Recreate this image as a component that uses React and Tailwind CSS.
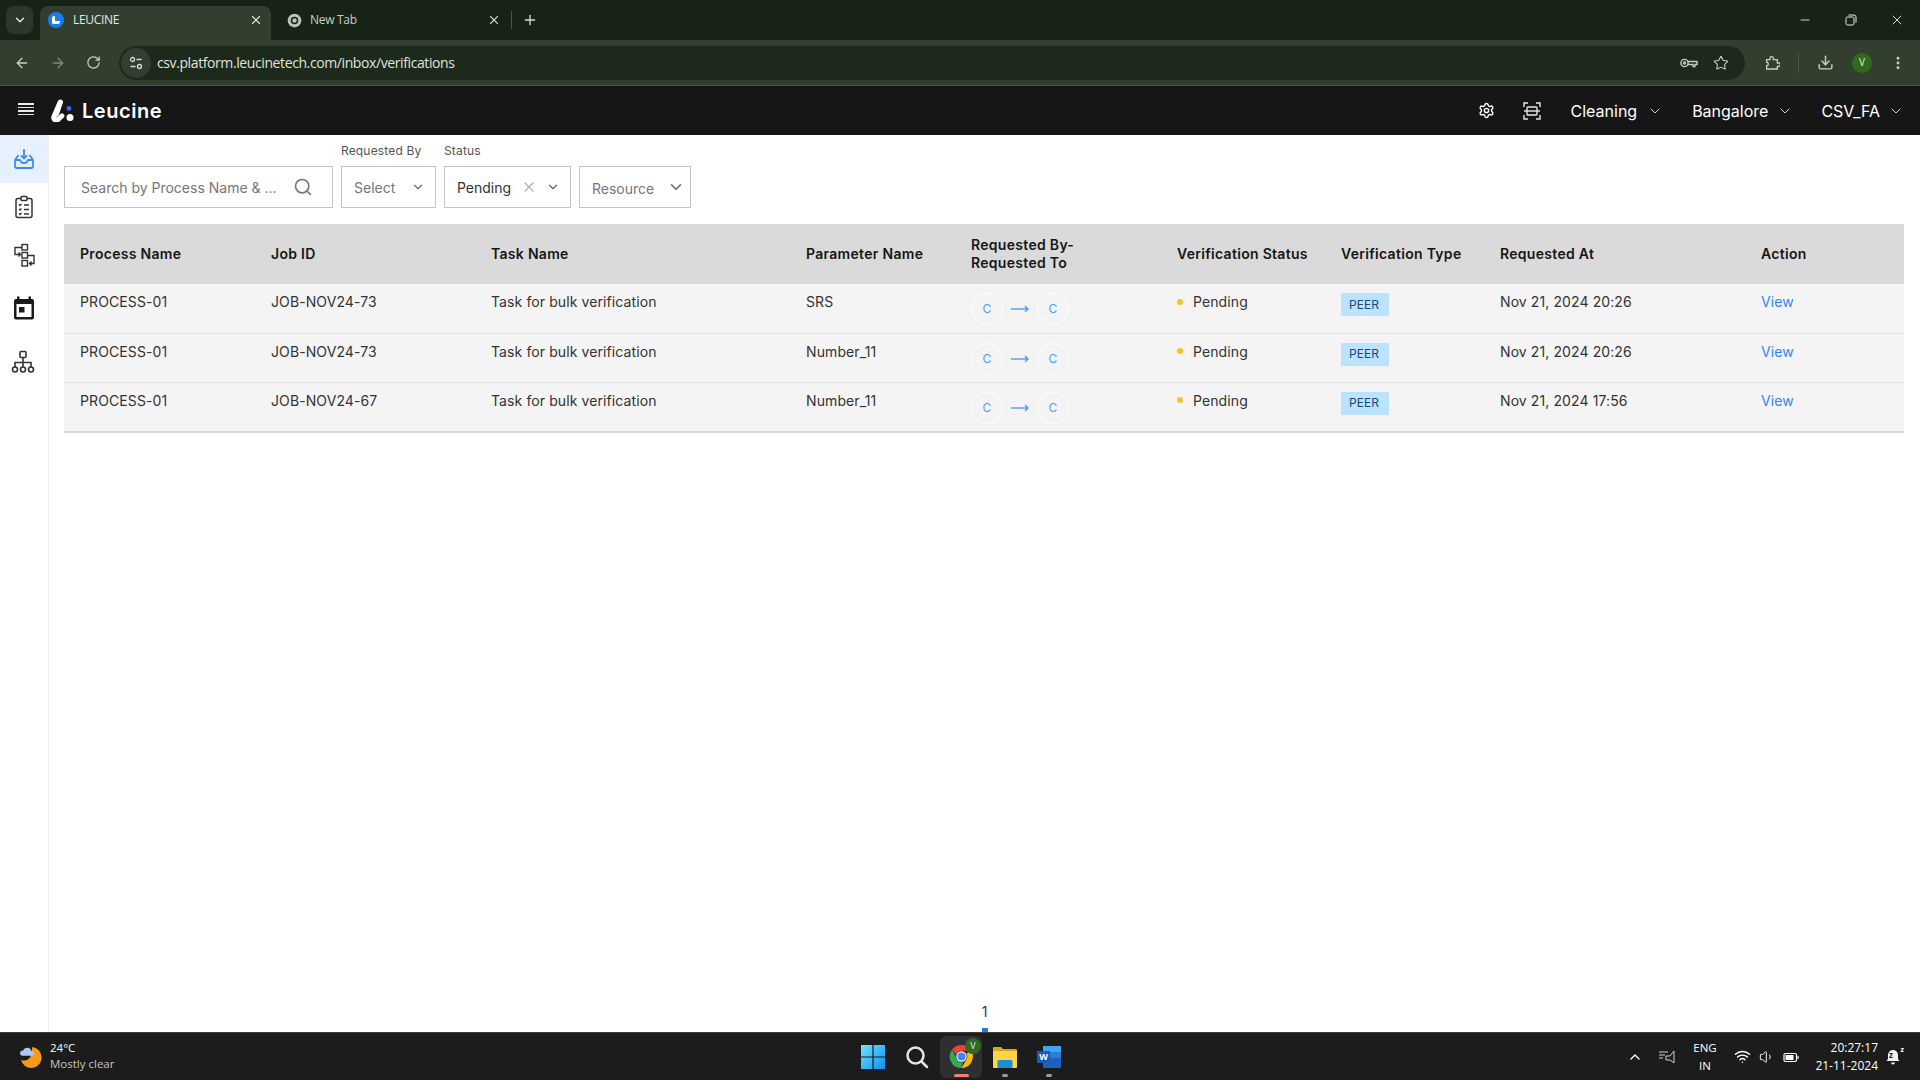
import React from "react";
import { ChevronDown, ArrowLeft, ArrowRight, RotateCw, Star, Download, Plus, X, Minus, Search, EllipsisVertical, ChevronUp, Wifi, Volume1, Settings } from "lucide-react";

const rows = [
  { job: "JOB-NOV24-73", param: "SRS", at: "Nov 21, 2024 20:26" },
  { job: "JOB-NOV24-73", param: "Number_11", at: "Nov 21, 2024 20:26" },
  { job: "JOB-NOV24-67", param: "Number_11", at: "Nov 21, 2024 17:56" },
];

const ChromeLogo = ({ size = 16, mono = false }) => (
  <svg width={size} height={size} viewBox="0 0 24 24">
    {mono ? (
      <>
        <circle cx="12" cy="12" r="11" fill="#b9c4b6" />
        <circle cx="12" cy="12" r="6" fill="#172415" />
        <circle cx="12" cy="12" r="3.6" fill="#b9c4b6" />
      </>
    ) : (
      <>
        <path d="M12 1a11 11 0 0 1 9.5 5.5H12a5.5 5.5 0 0 0-5.2 3.7L3.1 5.2A11 11 0 0 1 12 1z" fill="#ea4335" />
        <path d="M21.5 6.5A11 11 0 0 1 12 23l4.7-8.2A5.5 5.5 0 0 0 16.8 9z" fill="#fbbc04" />
        <path d="M12 23A11 11 0 0 1 3.1 5.2l4.2 9.4a5.5 5.5 0 0 0 6.1 2.8z" fill="#34a853" />
        <circle cx="12" cy="12" r="5" fill="#fff" />
        <circle cx="12" cy="12" r="3.9" fill="#4285f4" />
      </>
    )}
  </svg>
);

const BrowserChrome = () => (
  <div className="font-['Open_Sans',sans-serif] text-[12px]">
    <div className="flex h-[40px] items-end bg-[#172415] text-[#d5dcd2]">
      <div className="mb-[6px] ml-[6px] mr-[7px] flex h-[28px] w-[27px] items-center justify-center rounded-lg bg-[#2b382a]">
        <ChevronDown size={14} strokeWidth={2.5} className="text-[#dfe5dc]" />
      </div>
      <div className="flex h-[34px] w-[231px] items-center rounded-t-lg bg-[#323f2f] pb-[6px] pl-[8px] pr-[8px]">
        <div className="flex h-4 w-4 items-center justify-center rounded-full bg-[#1a7cf0]">
          <div className="h-[8px] w-[8px] rounded-[2px] rounded-tr-none border-b-[3px] border-l-[3px] border-white" />
        </div>
        <span className="ml-[9px] flex-1 tracking-[-0.3px] text-[#e3e8e0]">LEUCINE</span>
        <X size={14} strokeWidth={2} className="text-[#e3e8e0]" />
      </div>
      <div className="flex h-[34px] w-[240px] items-center pb-[6px] pl-[16px] pr-[10px]">
        <ChromeLogo size={15} mono />
        <span className="ml-[8px] flex-1 tracking-[-0.3px] text-[#c6cfc3]">New Tab</span>
        <X size={14} strokeWidth={2} className="text-[#c6cfc3]" />
      </div>
      <div className="mb-[11px] h-[18px] w-px bg-[#4a5747]" />
      <Plus size={16} strokeWidth={2} className="mb-[12px] ml-[10px] text-[#d5dcd2]" />
      <div className="mb-[12px] ml-auto flex items-center text-[#e7ebe5]">
        <Minus size={14} strokeWidth={1.5} className="mr-[33px]" />
        <svg width="12" height="12" viewBox="0 0 12 12" fill="none" stroke="currentColor" className="mr-[32px]">
          <rect x="1" y="3" width="8" height="8" rx="1.5" />
          <path d="M3.5 1h5.5a2 2 0 0 1 2 2v5.5" />
        </svg>
        <X size={16} strokeWidth={1.4} className="mr-[15px]" />
      </div>
    </div>
    <div className="flex h-[46px] items-center border-b border-[#4a5747] bg-[#323f2f] text-[#c6cfc3]">
      <ArrowLeft size={16} className="ml-[14px]" />
      <ArrowRight size={16} className="ml-[20px] text-[#7d8a79]" />
      <RotateCw size={15} className="ml-[20px]" />
      <div className="ml-[18px] flex h-[34px] w-[1626px] items-center rounded-full bg-[#1d2a1b] pl-[2px] pr-[16px]">
        <div className="flex h-[30px] w-[30px] items-center justify-center rounded-full bg-[#323f2f]">
          <svg width="14" height="14" viewBox="0 0 14 14" fill="none" stroke="#d5dcd2" strokeWidth="1.3">
            <circle cx="3.5" cy="3.5" r="2" />
            <path d="M7.5 3.5h5M1.5 10.5h5" />
            <circle cx="10.5" cy="10.5" r="2" />
          </svg>
        </div>
        <span className="ml-[6px] flex-1 text-[14px] tracking-[-0.4px] text-[#dfe5dc]">
          csv.platform.leucinetech.com/inbox/verifications
        </span>
        <svg width="18" height="12" viewBox="0 0 18 12" fill="none" stroke="#c6cfc3" strokeWidth="1.4">
          <circle cx="4.5" cy="6" r="3.6" />
          <circle cx="4.5" cy="6" r="1" />
          <path d="M8 4.5h9v3h-2v2h-2v-2H8" />
        </svg>
        <Star size={16} strokeWidth={1.6} className="ml-[15px] text-[#c6cfc3]" />
      </div>
      <svg width="16" height="16" viewBox="0 0 24 24" fill="none" stroke="#c6cfc3" strokeWidth="2" className="ml-[19px]">
        <path d="M4 7h5V5a2.5 2.5 0 0 1 5 0v2h6v5h2a2.5 2.5 0 0 1 0 5h-2v4H4v-5a2.5 2.5 0 0 0 0-5z" />
      </svg>
      <div className="ml-[18px] h-[20px] w-px bg-[#4a5747]" />
      <Download size={17} strokeWidth={2} className="ml-[18px]" />
      <div className="ml-[18px] flex h-[20px] w-[20px] items-center justify-center rounded-full bg-[#2f6a1f] text-[10px] text-[#e3e8e0]">V</div>
      <EllipsisVertical size={16} strokeWidth={2.4} className="ml-[18px]" />
    </div>
  </div>
);

const AppHeader = () => (
  <div className="flex h-[49px] items-center bg-[#161616] font-['Inter',sans-serif] text-white">
    <div className="mb-[3px] ml-[18px] flex w-[16px] flex-col gap-[2px]">
      <div className="h-[1.5px] bg-[#e8e8e8]" />
      <div className="h-[1.5px] bg-[#e8e8e8]" />
      <div className="h-[1.5px] bg-[#e8e8e8]" />
      <div className="h-[1.5px] bg-[#e8e8e8]" />
    </div>
    <svg width="23" height="23" viewBox="0 0 23 23" className="ml-[17px]">
      <path d="M9 3.5 3 17.5c-1 2.500 1.500 4.500 3.800 3.200l4-3.700" fill="none" stroke="#fff" strokeWidth="5" strokeLinecap="round" />
      <path d="M9.500 3 5.500 15" stroke="#fff" strokeWidth="5" strokeLinecap="round" />
      <circle cx="19" cy="18.500" r="3.500" fill="#fff" />
      <circle cx="18" cy="9.500" r="2.400" fill="#2f6df6" />
    </svg>
    <span className="ml-[8px] text-[20px] font-semibold tracking-[0.55px]">Leucine</span>
    <Settings size={17} strokeWidth={2} className="ml-auto" />
    <svg width="18" height="18" viewBox="0 0 18 18" fill="none" stroke="#e8e8e8" strokeWidth="1.4" className="ml-[28px]">
      <path d="M1 5V1h4M13 1h4v4M17 13v4h-4M5 17H1v-4" />
      <rect x="4" y="5" width="10" height="8" rx="1" />
      <path d="M1 9h16" />
    </svg>
    <span className="ml-[30px] text-[16px]">Cleaning</span>
    <ChevronDown size={16} strokeWidth={1.5} className="ml-[10px] text-[#cfcfcf]" />
    <span className="ml-[29px] text-[16px]">Bangalore</span>
    <ChevronDown size={16} strokeWidth={1.5} className="ml-[9px] text-[#cfcfcf]" />
    <span className="ml-[28px] text-[16px]">CSV_FA</span>
    <ChevronDown size={16} strokeWidth={1.5} className="ml-[8px] mr-[16px] text-[#cfcfcf]" />
  </div>
);

const Sidebar = () => (
  <div className="flex w-[49px] flex-col items-center border-r border-[#efefef] bg-white">
    <div className="flex h-[48px] w-full items-center justify-center bg-[#e7f1fd]">
      <svg width="24" height="24" viewBox="0 0 24 24" fill="none" stroke="#3d8bf5" strokeWidth="1.8">
        <path d="M6.500 8 3 13v6a2 2 0 0 0 2 2h14a2 2 0 0 0 2-2v-6l-3.500-5" />
        <path d="M3 13h5c.5 2 2 3 4 3s3.500-1 4-3h5" />
        <path d="M12 2v9M9 8.500l3 3 3-3" />
      </svg>
    </div>
    <div className="flex h-[48px] items-center justify-center">
      <svg width="24" height="24" viewBox="0 0 24 24" fill="none" stroke="#333" strokeWidth="1.5">
        <rect x="4" y="3.500" width="16" height="19" rx="2" />
        <rect x="9" y="1.500" width="6" height="4" rx="1" fill="#fff" />
        <path d="M7 9.500l1 1 1.500-1.500M7 14l1 1 1.500-1.500M7 18.500l1 1 1.500-1.500M12 10h5M12 14.500h5M12 19h5" strokeWidth="1.300" />
      </svg>
    </div>
    <div className="flex h-[48px] items-center justify-center">
      <svg width="24" height="24" viewBox="0 0 24 24" fill="none" stroke="#333" strokeWidth="1.4">
        <rect x="10" y="1.500" width="5.500" height="5.500" />
        <rect x="10" y="9.500" width="5.500" height="5.500" />
        <rect x="10" y="17.500" width="5.500" height="5.500" />
        <path d="M10 4.500H3v7h5M6.500 9.500l2 2-2 2M15.500 12.500H22v8h-4M19.500 18.500l-2 2 2 2" />
      </svg>
    </div>
    <div className="flex h-[58px] items-center justify-center">
      <svg width="24" height="24" viewBox="0 0 24 24">
        <path d="M5 0.500h2.500V3h9V0.500H19V3h1a2 2 0 0 1 2 2v16.500a2 2 0 0 1-2 2H4a2 2 0 0 1-2-2V5a2 2 0 0 1 2-2h1z" fill="#1a1a1a" />
        <rect x="4.500" y="8" width="15" height="13" fill="#fff" />
        <rect x="7" y="11" width="5.500" height="5.500" fill="#1a1a1a" />
      </svg>
    </div>
    <div className="mr-[2px] flex h-[50px] items-center justify-center">
      <svg width="24" height="24" viewBox="0 0 24 24" fill="none" stroke="#333" strokeWidth="1.6">
        <rect x="9" y="1.500" width="6" height="6" rx="1" />
        <path d="M12 7.500V17M4 17v-4.500h16V17" />
        <circle cx="4" cy="19.500" r="2.500" />
        <circle cx="12" cy="19.500" r="2.500" />
        <circle cx="20" cy="19.500" r="2.500" />
      </svg>
    </div>
  </div>
);

const Box = ({ w, children }) => (
  <div className={`flex h-[42px] items-center border border-[#c4c4c4] bg-white text-[14px] ${w}`}>{children}</div>
);

const Filters = () => (
  <div className="flex items-end gap-2 text-[14px]">
    <Box w="w-[269px]">
      <span className="ml-[16px] flex-1 text-[#767676]">Search by Process Name &amp; ...</span>
      <Search size={20} strokeWidth={2} className="mr-[19px] text-[#777]" />
    </Box>
    <div>
      <div className="mb-[7px] text-[12px] leading-4 tracking-[0.16px] text-[#555]">Requested By</div>
      <Box w="w-[95px]">
        <span className="ml-[12px] flex-1 text-[#767676]">Select</span>
        <ChevronDown size={14} strokeWidth={2} className="mr-[10px] text-[#666]" />
      </Box>
    </div>
    <div>
      <div className="mb-[7px] text-[12px] leading-4 tracking-[0.16px] text-[#555]">Status</div>
      <Box w="w-[127px]">
        <span className="ml-[12px] flex-1 text-[#333]">Pending</span>
        <X size={16} strokeWidth={2} className="text-[#b5b5b5]" />
        <ChevronDown size={14} strokeWidth={2} className="ml-[9px] mr-[10px] text-[#666]" />
      </Box>
    </div>
    <Box w="w-[112px]">
      <span className="ml-[12px] flex-1 pt-[2px] text-[#767676]">Resource</span>
      <ChevronDown size={18} strokeWidth={2} className="mr-[5px] text-[#666]" />
    </Box>
  </div>
);

const Initial = () => (
  <div className="flex h-[32px] w-[32px] items-center justify-center rounded-full border border-white text-[12px] text-[#4d9bff]">C</div>
);

const VerificationTable = () => (
  <table className="mt-4 w-[1840px] table-fixed border-collapse text-[14px] tracking-[0.1px] text-[#333]">
    <colgroup>
      <col className="w-[191px]" />
      <col className="w-[220px]" />
      <col className="w-[315px]" />
      <col className="w-[165px]" />
      <col className="w-[206px]" />
      <col className="w-[164px]" />
      <col className="w-[159px]" />
      <col className="w-[261px]" />
      <col />
    </colgroup>
    <thead>
      <tr className="h-[60px] bg-[#dadada] text-left tracking-[0.3px] text-[#161616]">
        {["Process Name", "Job ID", "Task Name", "Parameter Name"].map((h) => (
          <th key={h} className="pb-[2px] pl-4 font-semibold">{h}</th>
        ))}
        <th className="pl-4 font-semibold leading-[18px]">Requested By-<br />Requested To</th>
        {["Verification Status", "Verification Type", "Requested At", "Action"].map((h) => (
          <th key={h} className="pb-[2px] pl-4 font-semibold">{h}</th>
        ))}
      </tr>
    </thead>
    <tbody>
      {rows.map((r, i) => (
        <tr key={i} className={`bg-[#f4f4f4] align-top ${i === 2 ? "h-[50px] border-b-2 border-[#d8d8d8]" : "h-[49px] border-b border-[#e0e0e0]"}`}>
          <td className="pl-4 pt-[7px]">PROCESS-01</td>
          <td className="pl-4 pt-[7px]">{r.job}</td>
          <td className="pl-4 pt-[7px]">Task for bulk verification</td>
          <td className="pl-4 pt-[7px]">{r.param}</td>
          <td className="pl-4 pt-[9px]">
            <div className="flex items-center">
              <Initial />
              <svg width="18" height="8" viewBox="0 0 18 8" fill="none" stroke="#5a9cff" strokeWidth="1.5" className="mx-[8px]">
                <path d="M0 4h17M14 1l3 3-3 3" />
              </svg>
              <Initial />
            </div>
          </td>
          <td className="pl-4 pt-[7px]">
            <div className="flex items-center">
              <div className="h-[6px] w-[6px] rounded-full bg-[#f7c325]" />
              <span className="ml-[10px]">Pending</span>
            </div>
          </td>
          <td className="pl-4 pt-[9px]">
            <div className="flex h-[23px] w-[48px] items-center justify-center bg-[#bbe3ff] pr-[2px] text-[12px] text-[#1b4a74]">PEER</div>
          </td>
          <td className="pl-4 pt-[7px]">{r.at}</td>
          <td className="pl-4 pt-[7px] text-[#2f86f6]">View</td>
        </tr>
      ))}
    </tbody>
  </table>
);

const WindowsLogo = () => (
  <svg width="24" height="24" viewBox="0 0 24 24">
    <defs>
      <linearGradient id="win" x1="0" y1="0" x2="1" y2="1">
        <stop offset="0" stopColor="#6fe3ff" />
        <stop offset="1" stopColor="#0f8ff0" />
      </linearGradient>
    </defs>
    <path d="M0 0h11.400v11.400H0zM12.600 0H24v11.400H12.600zM0 12.600h11.400V24H0zM12.600 12.600H24V24H12.600z" fill="url(#win)" />
  </svg>
);

const TaskIcon = ({ mark, children }) => (
  <div className="relative flex h-[44px] w-[44px] items-center justify-center">
    {children}
    {mark && <div className={`absolute bottom-[2px] h-[3px] rounded-full ${mark}`} />}
  </div>
);

const Taskbar = () => (
  <div className="flex h-[48px] items-center border-t border-[#3b3b3b] bg-[#1c1c1c] font-['Open_Sans',sans-serif] text-[12px] text-white">
    <div className="flex w-[851px] items-center">
      <svg width="24" height="24" viewBox="0 0 24 24" className="ml-[18px]">
        <path d="M14 2a10.500 10.500 0 1 1-11 13c5 2 12-1 11-13z" fill="#f59a1b" />
        <path d="M2 8.500a3 3 0 0 1 3-3 4.500 4.500 0 0 1 8.500.500 2.500 2.500 0 0 1 1 4.800H4a3 3 0 0 1-2-2.300z" fill="#a9c9f5" />
      </svg>
      <div className="mb-[2px] ml-[8px] leading-[16px]">
        <div className="text-[11.5px]">24°C</div>
        <div className="text-[11.5px] text-[#c4c4c4]">Mostly clear</div>
      </div>
    </div>
    <TaskIcon><WindowsLogo /></TaskIcon>
    <TaskIcon>
      <svg width="24" height="24" viewBox="0 0 24 24" fill="none" stroke="#e4e4e4" strokeWidth="2.500">
        <circle cx="10.500" cy="10.500" r="8" />
        <path d="M16.500 16.500 22 22" strokeLinecap="round" />
      </svg>
    </TaskIcon>
    <TaskIcon mark="w-[15px] bg-[#f07f6e]">
      <div className="absolute inset-y-[1px] inset-x-[1px] rounded-md bg-[#2e2e33]" />
      <div className="relative"><ChromeLogo size={25} /></div>
      <div className="absolute right-[2px] top-[3px] flex h-[16px] w-[16px] items-center justify-center rounded-full bg-[#2f6a1f] text-[9px] text-[#e3e8e0]">V</div>
    </TaskIcon>
    <TaskIcon mark="w-[6px] bg-[#9a9a9a]">
      <svg width="24" height="22" viewBox="0 0 24 22">
        <path d="M0 2a1 1 0 0 1 1-1h7l2 2h13a1 1 0 0 1 1 1v4H0z" fill="#d9a520" />
        <path d="M0 5h24v16a1 1 0 0 1-1 1H1a1 1 0 0 1-1-1z" fill="#fbd547" />
        <rect x="4.500" y="14" width="15" height="8" rx="1.500" fill="#1b8fd6" />
      </svg>
    </TaskIcon>
    <TaskIcon mark="w-[6px] bg-[#9a9a9a]">
      <div className="relative h-[22px] w-[24px]">
        <svg width="24" height="22" viewBox="0 0 24 22">
          <rect x="6" y="0" width="18" height="22" rx="1.500" fill="#1f5fbf" />
          <rect x="6" y="0" width="18" height="6" fill="#41a5ee" />
          <rect x="6" y="6" width="18" height="6" fill="#2b7cd3" />
        </svg>
        <div className="absolute left-0 top-[5px] flex h-[12px] w-[13px] items-center justify-center bg-[#185abd] text-[9px] font-bold leading-none text-white">W</div>
      </div>
    </TaskIcon>
    <div className="ml-auto flex items-center">
      <ChevronUp size={16} strokeWidth={2} />
      <svg width="16" height="16" viewBox="0 0 16 16" fill="none" stroke="#d0d0d0" strokeWidth="1" className="ml-[16px]">
        <path d="M0 3h9M0 6h6M0 9h4M15 2v12l-4-3H7V7h4z" />
      </svg>
      <div className="ml-[10px] w-[40px] text-center text-[11.500px] leading-[18px]">ENG<br />IN</div>
      <Wifi size={17} strokeWidth={2} className="ml-[9px]" />
      <Volume1 size={16} strokeWidth={1.4} className="ml-[8px]" />
      <svg width="16" height="14" viewBox="0 0 16 14" fill="none" stroke="#fff" strokeWidth="1.200" className="ml-[8px]">
        <rect x="1" y="3.500" width="12.500" height="8" rx="1.500" />
        <rect x="2.500" y="5" width="8" height="5" fill="#fff" stroke="none" />
        <path d="M15 6v3" />
      </svg>
      <div className="ml-[7px] w-[72px] text-right text-[12px] leading-[18px]">20:27:17<br />21-11-2024</div>
      <div className="relative ml-[7px] mr-[19px] h-[16px] w-[16px]">
        <svg width="16" height="16" viewBox="0 0 16 16">
          <path d="M8 1a5 5 0 0 0-5 5v4l-1.500 2h13L13 10V6a5 5 0 0 0-5-5zM6 13.500h4a2 2 0 0 1-4 0z" fill="#f2f2f2" />
        </svg>
        <span className="absolute left-[4px] top-[2px] text-[8px] font-bold leading-[8px] text-[#1c1c1c]">z</span>
        <span className="absolute right-[-3px] top-[-3px] text-[7px] font-bold leading-[7px] text-white">z</span>
      </div>
    </div>
  </div>
);

const App = () => {
  return (
    <div className="flex h-screen w-full flex-col overflow-hidden bg-white">
      <BrowserChrome />
      <AppHeader />
      <div className="flex min-h-0 flex-1 font-['Inter',sans-serif]">
        <Sidebar />
        <div className="flex flex-1 flex-col pl-[15px] pt-2">
          <Filters />
          <VerificationTable />
          <div className="mt-auto flex flex-col items-center pr-[15px]">
            <span className="text-[14px] leading-5 text-[#1a3a5c]">1</span>
            <div className="mt-[6px] h-[4px] w-[6px] bg-[#1a7cf0]" />
          </div>
        </div>
      </div>
      <Taskbar />
    </div>
  );
};

export default App;
